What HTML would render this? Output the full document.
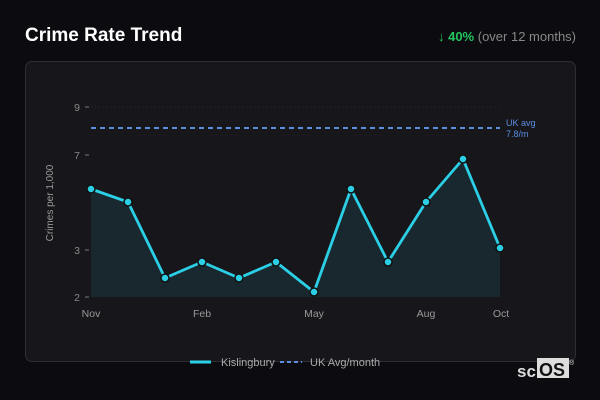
<!DOCTYPE html>
<html><head><style>
body{margin:0;width:600px;height:400px;background:#0c0c10;font-family:"Liberation Sans",sans-serif;overflow:hidden;position:relative}
.t{position:absolute;left:25px;top:25px;color:#fff;font-weight:bold;font-size:19px}
.r{position:absolute;right:24px;top:29px;color:#888;font-size:13px}
.r b{color:#22c55e}
.p{position:absolute;left:25px;top:61px;width:549px;height:299px;border:1px solid #2e2e33;border-radius:7px;background:#17171b}
</style></head><body>
<div class="t">Crime Rate Trend</div>
<div class="r"><b><span style="font-weight:normal">↓</span> 40%</b> (over 12 months)</div>
<div class="p"></div>
<svg width="600" height="400" style="position:absolute;left:0;top:0" font-family="Liberation Sans, sans-serif">
<line x1="91" y1="107" x2="500" y2="107" stroke="#2a2a30" stroke-dasharray="1,3"/>
<g fill="#888" font-size="10.5" text-anchor="end">
<text x="80" y="111">9</text><text x="80" y="159">7</text><text x="80" y="254">3</text><text x="80" y="301">2</text>
</g>
<g stroke="#777"><line x1="85" y1="107" x2="89" y2="107"/><line x1="85" y1="155" x2="89" y2="155"/><line x1="85" y1="250" x2="89" y2="250"/><line x1="85" y1="297" x2="89" y2="297"/></g>
<text transform="translate(53,203) rotate(-90)" fill="#999" font-size="10" text-anchor="middle">Crimes per 1,000</text>
<polygon fill="#19282e" points="91,189 128,202 165,278 202,262 239,278 276,262 314,292 351,189 388,262 426,202 463,159 500,248 500,297 91,297"/>
<line x1="91" y1="128" x2="500" y2="128" stroke="#5b8de0" stroke-width="2" stroke-dasharray="5,4"/>
<text x="506" y="126" fill="#5b8de0" font-size="9">UK avg</text>
<text x="506" y="137" fill="#5b8de0" font-size="9">7.8/m</text>
<polyline fill="none" stroke="#2bcfe6" stroke-width="2.8" stroke-linejoin="round" points="91,189 128,202 165,278 202,262 239,278 276,262 314,292 351,189 388,262 426,202 463,159 500,248"/>
<g fill="#2bcfe6" stroke="#111" stroke-width="1.5">
<circle cx="91" cy="189" r="4"/><circle cx="128" cy="202" r="4"/><circle cx="165" cy="278" r="4"/><circle cx="202" cy="262" r="4"/><circle cx="239" cy="278" r="4"/><circle cx="276" cy="262" r="4"/><circle cx="314" cy="292" r="4"/><circle cx="351" cy="189" r="4"/><circle cx="388" cy="262" r="4"/><circle cx="426" cy="202" r="4"/><circle cx="463" cy="159" r="4"/><circle cx="500" cy="248" r="4"/>
</g>
<g fill="#999" font-size="10.5" text-anchor="middle">
<text x="91" y="317">Nov</text><text x="202" y="317">Feb</text><text x="314" y="317">May</text><text x="426" y="317">Aug</text><text x="501" y="317">Oct</text>
</g>
<line x1="190" y1="362" x2="211" y2="362" stroke="#2bcfe6" stroke-width="3"/>
<text x="221" y="366" fill="#aaa" font-size="11">Kislingbury</text>
<line x1="280" y1="362" x2="302" y2="362" stroke="#5b8de0" stroke-width="2" stroke-dasharray="4,3"/>
<text x="310" y="366" fill="#aaa" font-size="11">UK Avg/month</text>
<text x="517" y="377" fill="#ddd" font-size="17" font-weight="bold">sc</text>
<rect x="537" y="358" width="32" height="20" fill="#ddd"/>
<text x="539" y="376" fill="#111" font-size="18" font-weight="bold">OS</text>
<text x="569" y="365" fill="#ddd" font-size="7">®</text>
</svg>
</body></html>
